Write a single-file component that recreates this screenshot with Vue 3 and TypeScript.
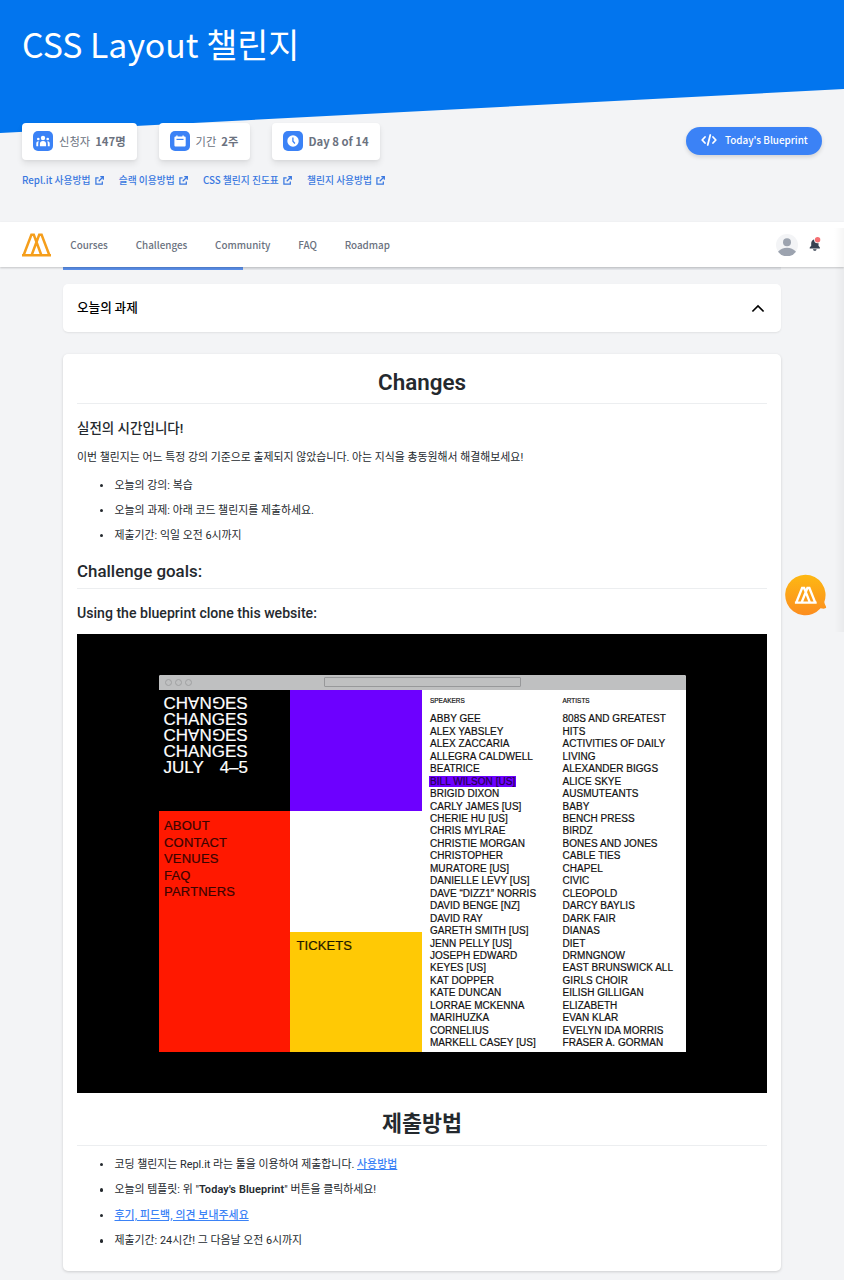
<script setup lang="ts">
interface ListItem {
  before?: string
  strong?: string
  link?: string
  after?: string
}

const helpLinks: string[] = ['Repl.it 사용방법', '슬랙 이용방법', 'CSS 챌린지 진도표', '챌린지 사용방법']
const navItems: string[] = ['Courses', 'Challenges', 'Community', 'FAQ', 'Roadmap']

const goals: string[] = [
  '오늘의 강의: 복습',
  '오늘의 과제: 아래 코드 챌린지를 제출하세요.',
  '제출기간: 익일 오전 6시까지',
]

const submission: ListItem[] = [
  { before: '코딩 챌린지는 Repl.it 라는 툴을 이용하여 제출합니다. ', link: '사용방법' },
  { before: '오늘의 템플릿: 위 "', strong: "Today's Blueprint", after: '" 버튼을 클릭하세요!' },
  { link: '후기, 피드백, 의견 보내주세요' },
  { before: '제출기간: 24시간! 그 다음날 오전 6시까지' },
]

const siteMenu: string[] = ['ABOUT', 'CONTACT', 'VENUES', 'FAQ', 'PARTNERS']
const titleRows: boolean[] = [true, false, true, false]
const titleLetters: string[] = ['C', 'H', 'A', 'N', 'G', 'E', 'S']

const speakers: string[] = [
  'ABBY GEE', 'ALEX YABSLEY', 'ALEX ZACCARIA', 'ALLEGRA CALDWELL', 'BEATRICE',
  'BILL WILSON [US]', 'BRIGID DIXON', 'CARLY JAMES [US]', 'CHERIE HU [US]',
  'CHRIS MYLRAE', 'CHRISTIE MORGAN', 'CHRISTOPHER', 'MURATORE [US]',
  'DANIELLE LEVY [US]', 'DAVE “DIZZ1” NORRIS', 'DAVID BENGE [NZ]', 'DAVID RAY',
  'GARETH SMITH [US]', 'JENN PELLY [US]', 'JOSEPH EDWARD', 'KEYES [US]',
  'KAT DOPPER', 'KATE DUNCAN', 'LORRAE MCKENNA', 'MARIHUZKA', 'CORNELIUS',
  'MARKELL CASEY [US]',
]
const artists: string[] = [
  '808S AND GREATEST', 'HITS', 'ACTIVITIES OF DAILY', 'LIVING', 'ALEXANDER BIGGS',
  'ALICE SKYE', 'AUSMUTEANTS', 'BABY', 'BENCH PRESS', 'BIRDZ', 'BONES AND JONES',
  'CABLE TIES', 'CHAPEL', 'CIVIC', 'CLEOPOLD', 'DARCY BAYLIS', 'DARK FAIR',
  'DIANAS', 'DIET', 'DRMNGNOW', 'EAST BRUNSWICK ALL', 'GIRLS CHOIR',
  'EILISH GILLIGAN', 'ELIZABETH', 'EVAN KLAR', 'EVELYN IDA MORRIS',
  'FRASER A. GORMAN',
]
const highlighted = 'BILL WILSON [US]'
</script>

<template>
  <div class="page">
    <header class="hero">
      <div class="hero-bg"></div>
      <h1 class="hero-title">CSS Layout 챌린지</h1>
      <div class="hero-row">
        <div class="stats">
          <div class="stat">
            <span class="stat-icon">
              <svg viewBox="0 0 20 20" width="20" height="20" fill="#fff">
                <circle cx="10" cy="7" r="2.2" />
                <circle cx="5.300" cy="8" r="1.300" />
                <circle cx="14.700" cy="8" r="1.300" />
                <path d="M6.900 15.300v-2.200c0-1.900 1-3.100 3.100-3.100s3.100 1.200 3.100 3.100v2.200z" />
                <path d="M3.300 15.300v-3c0-1.300.8-2 2.500-2-.5.900-.6 1.800-.6 3v2zM16.700 15.300v-3c0-1.300-.8-2-2.500-2 .5.900.6 1.800.6 3v2z" />
              </svg>
            </span>
            <span>신청자</span><b>147명</b>
          </div>
          <div class="stat">
            <span class="stat-icon">
              <svg viewBox="0 0 20 20" width="20" height="20">
                <path fill="#fff" d="M6.200 4.600h1.400v1h4.800v-1h1.400v1h.7c.8 0 1.200.5 1.200 1.200v7.400c0 .8-.5 1.300-1.300 1.300H5.700c-.8 0-1.300-.5-1.300-1.300V6.800c0-.7.5-1.200 1.200-1.200h.6z" />
                <path stroke="#3b82f6" stroke-width="1.200" d="M6.500 8.400h7" />
              </svg>
            </span>
            <span>기간</span><b>2주</b>
          </div>
          <div class="stat day">
            <span class="stat-icon">
              <svg viewBox="0 0 20 20" width="20" height="20">
                <circle cx="10" cy="10" r="5.700" fill="#fff" />
                <path d="M9.900 6.600v3.700l2 2.200" fill="none" stroke="#3b82f6" stroke-width="1.300" />
              </svg>
            </span>
            <b>Day 8 of 14</b>
          </div>
        </div>
        <button class="blueprint">
          <svg viewBox="0 0 16 12" width="16" height="12" fill="none" stroke="#fff" stroke-width="1.800" stroke-linecap="round" stroke-linejoin="round">
            <path d="M4 3 1.200 6 4 9M12 3l2.800 3L12 9M9.300 1 6.700 11" />
          </svg>
          <span>Today's Blueprint</span>
        </button>
      </div>
      <nav class="help">
        <a v-for="l in helpLinks" :key="l">
          <span>{{ l }}</span>
          <svg viewBox="0 0 8 8" width="9" height="9" fill="none" stroke="#3a78e0" stroke-width="1.100">
            <path d="M3.200 1.600H.8v5.700h5.700V4.900M4.700.6h2.700v2.700M7.300.7 3.300 4.700" />
          </svg>
        </a>
      </nav>
    </header>

    <nav class="navbar">
      <svg class="logo" viewBox="0 0 29 24" width="29" height="24" fill="none" stroke="#f59e1b" stroke-width="2.500">
        <path d="M1.600 22.300 9.400 1.700h2.400l7.600 20.600M27.400 22.300 19.600 1.700h-2.400L9.600 22.300M0 22.300h29" />
      </svg>
      <a v-for="n in navItems" :key="n">{{ n }}</a>
      <div class="user">
        <svg viewBox="0 0 22 22" width="22" height="22">
          <circle cx="11" cy="11" r="11" fill="#f3f4f6" />
          <circle cx="11" cy="8.300" r="4" fill="#9ca3af" />
          <path d="M2 17.700c2.400-2.700 5.500-4 9-4s6.600 1.300 9 4A11.300 11.300 0 0 1 11 22.300 11.300 11.300 0 0 1 2 17.700z" fill="#9ca3af" />
        </svg>
        <svg class="bell" viewBox="0 0 13 16" width="13" height="16">
          <path fill="#374151" d="M5.700 3.200c-2.300.4-3.500 2-3.500 4.100v2.500L.7 11.600v.9h10.200v-.9L9.500 9.800V6zM4 13.300h3.600c-.2 1-.9 1.500-1.800 1.500S4.200 14.300 4 13.300z" />
          <circle cx="8.600" cy="3.700" r="3.500" fill="#fff" />
          <circle cx="8.600" cy="3.700" r="2.700" fill="#f56f72" />
        </svg>
      </div>
    </nav>

    <main class="content">
      <div class="progress"><div class="progress-fill"></div></div>
      <section class="card task">
        <span>오늘의 과제</span>
        <svg viewBox="0 0 14 9" width="14" height="9" fill="none" stroke="#000" stroke-width="1.700">
          <path d="M1.400 7.500 7 1.900l5.600 5.600" />
        </svg>
      </section>

      <section class="card body">
        <h2 class="big">Changes</h2>
        <h4 class="sub first">실전의 시간입니다!</h4>
        <p class="para">이번 챌린지는 어느 특정 강의 기준으로 출제되지 않았습니다. 아는 지식을 총동원해서 해결해보세요!</p>
        <ul>
          <li v-for="g in goals" :key="g">{{ g }}</li>
        </ul>
        <h3 class="goals">Challenge goals:</h3>
        <h4 class="sub second">Using the blueprint clone this website:</h4>

        <div class="shot">
          <div class="window">
            <div class="bar">
              <div class="dots"><i></i><i></i><i></i></div>
              <div class="address"></div>
            </div>
            <div class="site">
              <div class="col">
                <div class="cell black">
                  <div v-for="(flip, r) in titleRows" :key="r" class="word">
                    <span
                      v-for="ch in titleLetters"
                      :key="ch"
                      :class="{ flip: flip && (ch === 'A' || ch === 'G') }"
                    >{{ ch }}</span>
                  </div>
                  <div class="word date"><span>JULY</span><span>4–5</span></div>
                </div>
                <div class="cell red">
                  <div v-for="m in siteMenu" :key="m">{{ m }}</div>
                </div>
              </div>
              <div class="col">
                <div class="cell purple"></div>
                <div class="cell white"></div>
                <div class="cell yellow">TICKETS</div>
              </div>
              <div class="names">
                <div class="label">SPEAKERS</div>
                <div v-for="s in speakers" :key="s" class="name"><span :class="{ hl: s === highlighted }">{{ s }}</span></div>
              </div>
              <div class="names">
                <div class="label">ARTISTS</div>
                <div v-for="a in artists" :key="a" class="name">{{ a }}</div>
              </div>
            </div>
          </div>
        </div>

        <h2 class="big submit">제출방법</h2>
        <ul class="last">
          <li v-for="(s, i) in submission" :key="i">{{ s.before }}<strong v-if="s.strong">{{ s.strong }}</strong><a v-if="s.link">{{ s.link }}</a>{{ s.after }}</li>
        </ul>
      </section>
    </main>

    <div class="edge-shadow"></div>
    <svg class="chat" viewBox="0 0 42 42" width="42" height="42">
      <defs>
        <linearGradient id="chatFill" x1="0" y1="0" x2="0" y2="1">
          <stop offset="0" stop-color="#fdb813" />
          <stop offset="1" stop-color="#fc8d1f" />
        </linearGradient>
      </defs>
      <path fill="url(#chatFill)" d="M20.300.8a20.200 20.200 0 0 1 19 27.200c.1 2.500 2.200 4.400 1.800 5.600-.5 1.500-3.700 1-5.500.7A20.200 20.200 0 1 1 20.300.8z" />
      <path fill="none" stroke="#fff" stroke-width="2.300" d="M11.300 28.500 17.100 14h2l5.800 14.500M30.200 28.500 24.400 14h-2l-5.800 14.500M9.900 28.600h21.800" />
    </svg>
  </div>
</template>

<style>
body {
  background: #f3f4f6;
}
</style>

<style scoped>
* {
  box-sizing: border-box;
}
.page {
  position: relative;
  width: 844px;
  height: 1280px;
  overflow: hidden;
  background: #f3f4f6;
  font-family: 'Noto Sans CJK KR', sans-serif;
}
.hero {
  position: relative;
  height: 222px;
  padding: 0 22px;
}
.hero-bg {
  position: absolute;
  inset: 0 0 auto 0;
  height: 133px;
  background: #0275ee;
  clip-path: polygon(0 0, 100% 0, 100% 89px, 0 133px);
}
.hero-title {
  position: relative;
  margin: 0;
  padding-top: 19px;
  height: 123px;
  font-size: 33.800px;
  line-height: 50px;
  font-weight: 400;
  color: #fff;
}
.hero-row {
  position: relative;
  display: flex;
  justify-content: space-between;
  align-items: center;
  height: 37px;
}
.stats {
  display: flex;
  gap: 22px;
}
.stat {
  display: flex;
  align-items: center;
  width: 114.500px;
  height: 37px;
  padding: 0 0 1px 11px;
  border-radius: 4px;
  background: #fff;
  color: #6b7280;
  font-size: 11.300px;
  line-height: 20px;
  box-shadow: 0 4px 6px rgba(0, 0, 0, 0.08), 0 1px 3px rgba(0, 0, 0, 0.05);
}
.stat:nth-child(2) {
  width: 91px;
}
.stat.day {
  width: 108px;
}
.stat-icon {
  width: 20px;
  height: 20px;
  margin-right: 6px;
  border-radius: 5px;
  background: #3b82f6;
}
.stat-icon svg {
  display: block;
}
.stat span + b {
  margin-left: 5px;
}
.stat.day b {
  margin-left: 0;
}
.blueprint {
  display: flex;
  align-items: center;
  gap: 8px;
  width: 136px;
  height: 28px;
  margin-top: -2px;
  padding: 0 0 1px 15px;
  border: 0;
  border-radius: 14px;
  background: #3b82f6;
  color: #fff;
  font: 500 9.900px/20px 'Noto Sans CJK KR', sans-serif;
  box-shadow: 0 2px 4px rgba(0, 0, 0, 0.14);
}
.help {
  position: relative;
  display: flex;
  gap: 15.200px;
  margin-top: 12px;
  color: #3a78e0;
  font-size: 9.750px;
  line-height: 16px;
  font-weight: 500;
}
.help a {
  display: flex;
  align-items: center;
  gap: 4px;
}
.navbar {
  position: relative;
  z-index: 2;
  display: flex;
  align-items: center;
  height: 45px;
  padding: 0 22px;
  background: #fff;
  color: #6b7280;
  font-size: 9.850px;
  line-height: 16px;
  font-weight: 500;
  box-shadow: 0 1px 2px rgba(0, 0, 0, 0.2);
}
.logo {
  margin-right: -8.500px;
}
.navbar a {
  margin-left: 27.850px;
}
.user {
  display: flex;
  align-items: center;
  gap: 11px;
  margin-left: auto;
}
.bell {
  margin-top: -2px;
}
.content {
  width: 718px;
  margin-left: 63px;
}
.progress {
  height: 3px;
  background: #e5e7eb;
}
.progress-fill {
  width: 25%;
  height: 3px;
  background: #5b8fea;
}
.card {
  border-radius: 5px;
  background: #fff;
  box-shadow: 0 1px 2px rgba(0, 0, 0, 0.08);
}
.task {
  display: flex;
  align-items: center;
  justify-content: space-between;
  height: 48px;
  margin-top: 14px;
  padding: 0 16px 0 14px;
  color: #000;
  font-size: 12.600px;
  line-height: 20px;
  font-weight: 500;
}
.task span {
  padding-bottom: 2px;
}
.body {
  height: 917px;
  margin-top: 22px;
  padding: 0 14px;
  color: #24292e;
  font-family: Roboto, 'Noto Sans CJK KR', sans-serif;
  box-shadow: 0 1px 3px rgba(0, 0, 0, 0.16);
}
.big {
  height: 50px;
  margin: 0;
  padding: 12px 0 0;
  border-bottom: 1px solid #eceef0;
  font-size: 22.400px;
  line-height: 32px;
  font-weight: 600;
  text-align: center;
}
.sub {
  margin: 0;
  font-size: 14.100px;
  line-height: 20px;
  font-weight: 500;
}
.first {
  padding-top: 14px;
  font-size: 13.500px;
}
.para {
  margin: 10px 0 0;
  font-size: 10.900px;
  line-height: 20px;
}
ul {
  margin: 4.500px 0 0;
  padding: 0 0 0 37.500px;
  list-style: none;
  font-size: 10.900px;
  line-height: 25.200px;
}
li {
  position: relative;
}
li::before {
  content: '';
  position: absolute;
  top: 11px;
  left: -15px;
  width: 3.500px;
  height: 3.500px;
  border-radius: 50%;
  background: #24292e;
}
.goals {
  height: 40.500px;
  margin: 0;
  padding-top: 11px;
  border-bottom: 1px solid #eceef0;
  font-size: 16.900px;
  line-height: 24px;
  font-weight: 500;
}
.second {
  padding-top: 14px;
  height: 45px;
}
.shot {
  height: 459.500px;
  padding: 41px 0 0 82px;
  background: #000;
  font-family: 'Liberation Sans', Arial, sans-serif;
  color: #111;
}
.window {
  width: 526.500px;
  height: 377px;
  overflow: hidden;
  border-radius: 2px 2px 0 0;
  background: #fff;
}
.bar {
  display: flex;
  align-items: center;
  height: 15.500px;
  padding-left: 5.500px;
  background: #bfc0c1;
}
.dots {
  display: flex;
  gap: 3px;
  width: 159px;
}
.dots i {
  width: 7px;
  height: 7px;
  border: 1px solid #a0a1a2;
  border-radius: 50%;
}
.address {
  width: 197px;
  height: 10px;
  border: 1px solid #97989a;
  border-radius: 1px;
}
.site {
  display: grid;
  grid-template-columns: 130.500px 132.500px 132.500px 131px;
  height: 361.500px;
}
.cell {
  height: 120.500px;
}
.black {
  padding: 5.500px 0 0 4.500px;
  background: #000;
  color: #fff;
  font-size: 17px;
  line-height: 16.100px;
  -webkit-text-stroke: 0.2px #fff;
}
.word {
  display: flex;
}
.date {
  justify-content: space-between;
  width: 84.500px;
}
.flip {
  transform: translateY(-2.500px) rotate(180deg);
}
.red {
  height: 241px;
  padding: 7.500px 0 0 5px;
  background: #ff1800;
  color: #3a0400;
  font-size: 13px;
  line-height: 16.600px;
  letter-spacing: 0.2px;
  -webkit-text-stroke: 0.2px #3a0400;
}
.purple {
  background: #6d00ff;
}
.white {
  height: 121.500px;
}
.yellow {
  padding: 6px 0 0 7px;
  background: #ffc905;
  color: #1e1800;
  font-size: 13px;
  line-height: 16px;
  letter-spacing: 0.1px;
  -webkit-text-stroke: 0.2px #1e1800;
}
.names {
  padding: 6px 0 0 8px;
  font-size: 10px;
  line-height: 12.460px;
  letter-spacing: 0.040px;
  white-space: nowrap;
  -webkit-text-stroke: 0.200px currentColor;
}
.label {
  height: 17.300px;
  font-size: 6.400px;
  line-height: 10px;
}
.hl {
  margin-left: -1px;
  padding: 0 1px;
  background: #6d00ff;
  color: #26004f;
}
.submit {
  height: 52.500px;
  padding-top: 15px;
  font-size: 21.800px;
}
.last {
  margin-top: 6.300px;
  line-height: 25.400px;
}
ul a {
  color: #3b82f6;
  font-weight: 500;
  letter-spacing: 0.060px;
  text-decoration: underline;
}
strong {
  font-weight: 600;
  letter-spacing: 0.120px;
}
.edge-shadow {
  position: absolute;
  z-index: 3;
  top: 228px;
  right: 0;
  width: 10px;
  height: 404px;
  background: linear-gradient(to right, rgba(0, 0, 0, 0), rgba(0, 0, 0, 0.04));
}
.chat {
  position: absolute;
  z-index: 4;
  top: 574px;
  left: 785px;
}
</style>
